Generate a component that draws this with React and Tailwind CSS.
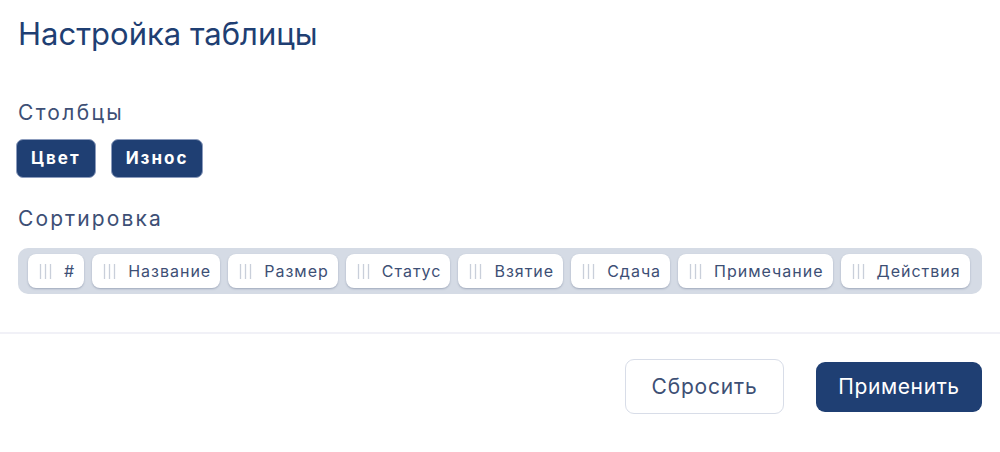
import React from "react";

const columns = ["Цвет", "Износ"];
const sortItems = ["#", "Название", "Размер", "Статус", "Взятие", "Сдача", "Примечание", "Действия"];

const Grip = () => (
  <svg width="13" height="15" viewBox="0 0 13 15" className="shrink-0">
    <line x1="1.5" y1="0" x2="1.5" y2="15" stroke="#c9cfda" strokeWidth="1.3" />
    <line x1="6.5" y1="0" x2="6.5" y2="15" stroke="#c9cfda" strokeWidth="1.3" />
    <line x1="11.5" y1="0" x2="11.5" y2="15" stroke="#c9cfda" strokeWidth="1.3" />
  </svg>
);

export default function App() {
  return (
    <div className="w-[1000px] h-[452px] bg-white font-['Inter',sans-serif] overflow-hidden">
      <div className="px-[18px] pt-[14px]">
        <h2 className="text-[31px] leading-[40px] text-[#1f3f73]">Настройка таблицы</h2>

        <div className="mt-[45px] text-[21px] leading-[28px] tracking-[2.3px] text-[#3d4f75]">Столбцы</div>
        <div className="mt-[12px] -ml-[2px] flex gap-[15px]">
          {columns.map((c) => (
            <div
              key={c}
              className="h-[39px] px-[14px] flex items-center rounded-[7px] bg-[#1f3f73] border border-[#8c9cbd] text-white font-bold text-[17px] tracking-[2px]"
            >
              {c}
            </div>
          ))}
        </div>

        <div className="mt-[27px] text-[21px] leading-[28px] tracking-[2.1px] text-[#3d4f75]">Сортировка</div>
        <div className="mt-[15px] h-[46px] bg-[#d5dbe5] rounded-[10px] px-[10px] flex items-center gap-[8px]">
          {sortItems.map((s) => (
            <div
              key={s}
              className="h-[34px] bg-white rounded-[8px] shadow-[0_1px_2px_rgba(60,75,110,0.35)] pl-[11px] pr-[9px] flex items-center gap-[12px] text-[16px] tracking-[1px] text-[#3d4f75]"
            >
              <Grip />
              <span>{s}</span>
            </div>
          ))}
        </div>
      </div>

      <div className="mt-[38px] border-t-2 border-[#f1f1f7]" />

      <div className="flex justify-end items-center gap-[32px] pr-[18px] pt-[25px]">
        <button className="h-[55px] w-[159px] rounded-[9px] border border-[#d8dde8] bg-white text-[21px] tracking-[0.8px] text-[#3d4f75]">
          Сбросить
        </button>
        <button className="h-[50px] w-[166px] rounded-[9px] bg-[#1f3f73] text-[21px] tracking-[0.6px] text-white">
          Применить
        </button>
      </div>
    </div>
  );
}
